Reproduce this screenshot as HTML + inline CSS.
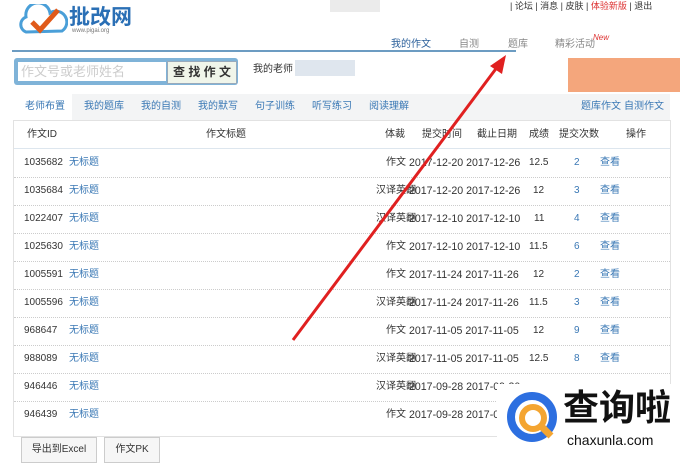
<!DOCTYPE html><html><head><meta charset="utf-8"><style>
body{margin:0;width:682px;height:473px;background:#fff;font-family:"Liberation Sans","Noto Sans CJK SC",sans-serif;font-size:10px;color:#333;position:relative;overflow:hidden}
.a{position:absolute;white-space:nowrap;line-height:12px}
.blue{color:#3a78b5}
.row{position:absolute;left:14px;width:656px;height:28px;border-bottom:1px dotted #ccc}
.row span{position:absolute;top:8px;line-height:12px;white-space:nowrap}
.row .d{font-size:10.6px;left:395px}
</style></head><body>
<svg class="a" style="left:18px;top:4px" width="50" height="32"><path d="M8 28 A8 8 0 0 1 8 13 A12 12 0 0 1 32 9 A9 9 0 0 1 44 27 Z" fill="#fff" stroke="#4a9fd8" stroke-width="3"/><path d="M14 18 L22 26 L40 6" fill="none" stroke="#e05a1a" stroke-width="5"/></svg>
<div class="a" style="left:69px;top:6px;font-size:21px;line-height:24px;font-weight:bold;color:#2a6fb5">批改网</div>
<div class="a" style="left:72px;top:28px;font-size:6px;line-height:7px;color:#777">www.pigai.org</div>
<div class="a" style="left:330px;top:0;width:50px;height:12px;background:#ddd;opacity:.6"></div>
<div class="a" style="left:510px;top:0px;font-size:9px;color:#333">| 论坛 | 消息 | 皮肤 | <span style="color:#d33">体验新版</span> | 退出</div>
<div class="a" style="left:391px;top:39px;font-size:10px;color:#2a5f9a">我的作文</div>
<div class="a" style="left:459px;top:39px;color:#888">自测</div>
<div class="a" style="left:508px;top:39px;color:#888">题库</div>
<div class="a" style="left:555px;top:39px;color:#888">精彩活动</div>
<div class="a" style="left:593px;top:32px;font-size:8px;color:#d33;font-style:italic">New</div>
<div class="a" style="left:12px;top:50px;width:504px;height:2px;background:#6c9cc2"></div>
<div class="a" style="left:14px;top:58px;width:224px;height:27px;background:#7fb3d8;border-radius:3px"></div>
<div class="a" style="left:18px;top:62px;width:145px;height:19px;background:#fff;font-size:13px;color:#ccc;padding-left:3px;line-height:19px">作文号或老师姓名</div>
<div class="a" style="left:167px;top:61px;width:68px;height:21px;background:#f0f5ea;border:1px solid #9ab;font-size:12px;font-weight:bold;line-height:21px;text-align:center">查 找 作 文</div>
<div class="a" style="left:253px;top:64px;font-size:10px">我的老师</div>
<div class="a" style="left:295px;top:60px;width:60px;height:16px;background:#dfe6ee"></div>
<div class="a" style="left:568px;top:58px;width:112px;height:34px;background:#f4a67c"></div>
<div class="a" style="left:14px;top:94px;width:656px;height:26px;background:#f3f4f5"></div>
<div class="a" style="left:14px;top:94px;width:58px;height:26px;background:#fff"></div>
<div class="a blue" style="left:25px;top:101px">老师布置</div>
<div class="a blue" style="left:84px;top:101px">我的题库</div>
<div class="a blue" style="left:141px;top:101px">我的自测</div>
<div class="a blue" style="left:198px;top:101px">我的默写</div>
<div class="a blue" style="left:255px;top:101px">句子训练</div>
<div class="a blue" style="left:312px;top:101px">听写练习</div>
<div class="a blue" style="left:369px;top:101px">阅读理解</div>
<div class="a blue" style="left:581px;top:101px">题库作文</div>
<div class="a blue" style="left:624px;top:101px">自测作文</div>
<div class="a" style="left:13px;top:120px;width:656px;height:315px;border:1px solid #e2e2e2"></div>
<div class="a" style="left:27px;top:129px">作文ID</div>
<div class="a" style="left:206px;top:129px">作文标题</div>
<div class="a" style="left:385px;top:129px">体裁</div>
<div class="a" style="left:422px;top:129px">提交时间</div>
<div class="a" style="left:477px;top:129px">截止日期</div>
<div class="a" style="left:529px;top:129px">成绩</div>
<div class="a" style="left:559px;top:129px">提交次数</div>
<div class="a" style="left:626px;top:129px">操作</div>
<div class="a" style="left:14px;top:148px;width:656px;height:1px;background:#dde6ee"></div>
<div class="row" style="top:149px"><span style="left:10px">1035682</span><span class="blue" style="left:55px">无标题</span><span style="left:372px">作文</span><span class="d">2017-12-20 2017-12-26</span><span style="left:515px">12.5</span><span class="blue" style="left:560px">2</span><span class="blue" style="left:586px">查看</span></div>
<div class="row" style="top:177px"><span style="left:10px">1035684</span><span class="blue" style="left:55px">无标题</span><span style="left:362px">汉译英翻</span><span class="d">2017-12-20 2017-12-26</span><span style="left:519px">12</span><span class="blue" style="left:560px">3</span><span class="blue" style="left:586px">查看</span></div>
<div class="row" style="top:205px"><span style="left:10px">1022407</span><span class="blue" style="left:55px">无标题</span><span style="left:362px">汉译英翻</span><span class="d">2017-12-10 2017-12-10</span><span style="left:520px">11</span><span class="blue" style="left:560px">4</span><span class="blue" style="left:586px">查看</span></div>
<div class="row" style="top:233px"><span style="left:10px">1025630</span><span class="blue" style="left:55px">无标题</span><span style="left:372px">作文</span><span class="d">2017-12-10 2017-12-10</span><span style="left:515px">11.5</span><span class="blue" style="left:560px">6</span><span class="blue" style="left:586px">查看</span></div>
<div class="row" style="top:261px"><span style="left:10px">1005591</span><span class="blue" style="left:55px">无标题</span><span style="left:372px">作文</span><span class="d">2017-11-24 2017-11-26</span><span style="left:519px">12</span><span class="blue" style="left:560px">2</span><span class="blue" style="left:586px">查看</span></div>
<div class="row" style="top:289px"><span style="left:10px">1005596</span><span class="blue" style="left:55px">无标题</span><span style="left:362px">汉译英翻</span><span class="d">2017-11-24 2017-11-26</span><span style="left:515px">11.5</span><span class="blue" style="left:560px">3</span><span class="blue" style="left:586px">查看</span></div>
<div class="row" style="top:317px"><span style="left:10px">968647</span><span class="blue" style="left:55px">无标题</span><span style="left:372px">作文</span><span class="d">2017-11-05 2017-11-05</span><span style="left:519px">12</span><span class="blue" style="left:560px">9</span><span class="blue" style="left:586px">查看</span></div>
<div class="row" style="top:345px"><span style="left:10px">988089</span><span class="blue" style="left:55px">无标题</span><span style="left:362px">汉译英翻</span><span class="d">2017-11-05 2017-11-05</span><span style="left:515px">12.5</span><span class="blue" style="left:560px">8</span><span class="blue" style="left:586px">查看</span></div>
<div class="row" style="top:373px"><span style="left:10px">946446</span><span class="blue" style="left:55px">无标题</span><span style="left:362px">汉译英翻</span><span class="d">2017-09-28 2017-09-30</span></div>
<div class="row" style="top:401px;border:none"><span style="left:10px">946439</span><span class="blue" style="left:55px">无标题</span><span style="left:372px">作文</span><span class="d">2017-09-28 2017-09</span></div>
<div class="a" style="left:21px;top:437px;width:74px;height:24px;border:1px solid #ccc;background:#f6f6f6;line-height:24px;text-align:center">导出到Excel</div>
<div class="a" style="left:104px;top:437px;width:54px;height:24px;border:1px solid #ccc;background:#f6f6f6;line-height:24px;text-align:center">作文PK</div>
<div class="a" style="left:497px;top:384px;width:185px;height:70px;background:#fff"></div>
<svg class="a" style="left:505px;top:390px" width="60" height="60"><circle cx="27" cy="27" r="21" fill="none" stroke="#2d6fe0" stroke-width="8"/><circle cx="28" cy="28" r="11" fill="none" stroke="#f4a531" stroke-width="6"/><path d="M35 35 L46 46" stroke="#f4a531" stroke-width="7"/></svg>
<div class="a" style="left:563px;top:388px;font-size:36px;color:#111;font-weight:bold;line-height:40px">查询啦</div>
<div class="a" style="left:567px;top:432px;font-size:14px;line-height:16px;color:#111">chaxunla.com</div>
<svg class="a" style="left:0;top:0" width="682" height="473"><line x1="293" y1="340" x2="498" y2="66" stroke="#e02020" stroke-width="3"/><path d="M506 55 L490 66 L502 74 Z" fill="#e02020"/></svg>
</body></html>
